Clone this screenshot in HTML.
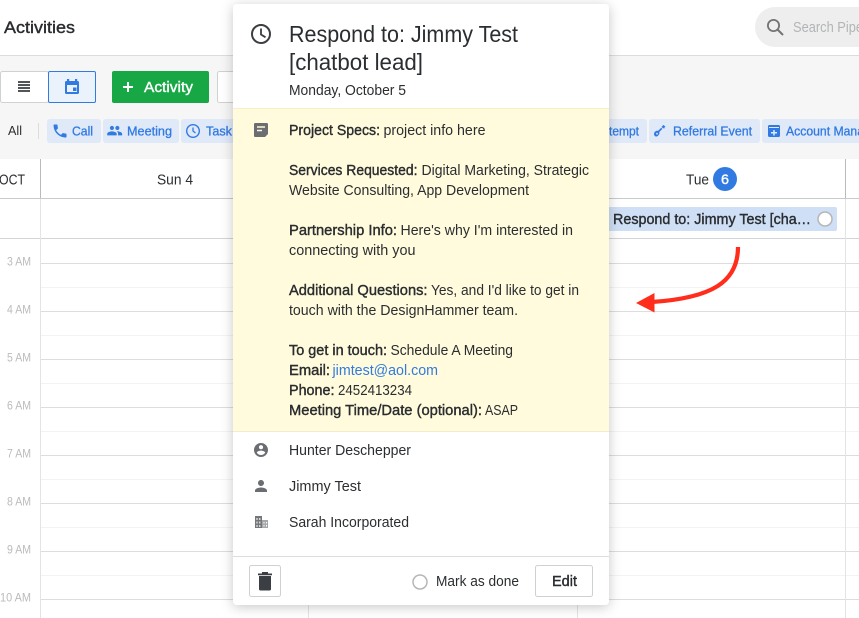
<!DOCTYPE html>
<html><head><meta charset="utf-8"><title>Activities</title>
<style>
html,body{margin:0;padding:0;background:#fff;width:859px;height:618px;overflow:hidden}
svg{display:block;font-family:"Liberation Sans",Arial,sans-serif}
text{fill:#2b2e31;font-size:14.6px}
.b{stroke:#26292c;stroke-width:.38px}
.w{stroke:#fff;stroke-width:.4px;fill:#fff}
.c text{fill:#317ae2;stroke:#317ae2;stroke-width:.3px;font-size:13px}
.h text{fill:#b9bbbd;font-size:12px}
</style></head><body>
<svg width="859" height="618" viewBox="0 0 859 618" xmlns="http://www.w3.org/2000/svg">
<defs>
<filter id="s" x="-10%" y="-10%" width="120%" height="120%"><feDropShadow dx="0" dy="2" stdDeviation="6" flood-color="#000" flood-opacity=".22"/></filter>
</defs>
<rect width="859" height="618" fill="#fff"/>
<!-- top bar -->
<text class="b" x="4" y="33" style="font-size:17px" textLength="71" lengthAdjust="spacingAndGlyphs">Activities</text>
<rect x="755" y="7" width="130" height="40" rx="20" fill="#eeeeee"/>
<circle cx="773.500" cy="25.500" r="5.600" fill="none" stroke="#727477" stroke-width="1.800"/>
<path d="M777.500 29.500l5.500 5.500" stroke="#727477" stroke-width="2"/>
<text x="793" y="32" style="font-size:15px;fill:#b2b4b6" textLength="70" lengthAdjust="spacingAndGlyphs">Search Pipe</text>
<rect y="55" width="859" height="1" fill="#dcdcdc"/>
<!-- toolbar -->
<rect y="56" width="859" height="103" fill="#f6f6f6"/>
<rect x="0.500" y="71.500" width="48" height="31" rx="2" fill="#fff" stroke="#d0d1d2"/>
<path d="M18 82h12M18 85h12M18 88h12M18 91h12" stroke="#3b3e42" stroke-width="1.800"/>
<rect x="48.500" y="71.500" width="47" height="31" rx="1.500" fill="#eaf2fc" stroke="#317ae2"/>
<path d="M66.500 81h11a1.500 1.500 0 0 1 1.500 1.500V92.500a1.500 1.500 0 0 1-1.500 1.500h-11A1.500 1.500 0 0 1 65 92.500V82.500A1.500 1.500 0 0 1 66.500 81z" fill="#317ae2"/>
<rect x="67" y="79" width="2.200" height="3" fill="#317ae2"/><rect x="75" y="79" width="2.200" height="3" fill="#317ae2"/>
<rect x="67" y="85" width="10" height="7" fill="#eaf2fc"/><rect x="73" y="87.500" width="3.500" height="3.500" fill="#317ae2"/>
<rect x="112" y="71" width="97" height="32" rx="2" fill="#17a745"/>
<path d="M123 87h10M128 82v10" stroke="#fff" stroke-width="2"/>
<text class="w" x="144" y="92" style="font-size:15px" textLength="49" lengthAdjust="spacingAndGlyphs">Activity</text>
<rect x="217.500" y="71.500" width="30" height="31" rx="2" fill="#fff" stroke="#d0d1d2"/>
<text x="8" y="135" style="font-size:13px" textLength="14" lengthAdjust="spacingAndGlyphs">All</text>
<rect x="38" y="123" width="1" height="16" fill="#dcdcdc"/>
<g fill="#dfe9f8">
<rect x="47" y="119" width="54" height="24" rx="3"/>
<rect x="103" y="119" width="76" height="24" rx="3"/>
<rect x="181" y="119" width="60" height="24" rx="3"/>
<rect x="600" y="119" width="47" height="24" rx="3"/>
<rect x="649" y="119" width="111" height="24" rx="3"/>
<rect x="762" y="119" width="110" height="24" rx="3"/>
</g>
<g class="c">
<text x="72" y="135.500" textLength="21" lengthAdjust="spacingAndGlyphs">Call</text>
<text x="127" y="135.500" textLength="45" lengthAdjust="spacingAndGlyphs">Meeting</text>
<text x="206" y="135.500" textLength="26" lengthAdjust="spacingAndGlyphs">Task</text>
<text x="609" y="135.500" textLength="30" lengthAdjust="spacingAndGlyphs">tempt</text>
<text x="673" y="135.500" textLength="79" lengthAdjust="spacingAndGlyphs">Referral Event</text>
<text x="786" y="135.500" textLength="78" lengthAdjust="spacingAndGlyphs">Account Mana</text>
</g>
<!-- chip icons -->
<path transform="translate(51.400 122.400) scale(.72)" fill="#317ae2" d="M6.620 10.790c1.440 2.830 3.760 5.140 6.590 6.590l2.200-2.200c.270-.270.670-.360 1.020-.240 1.120.370 2.330.570 3.570.570.550 0 1 .450 1 1V20c0 .550-.450 1-1 1-9.390 0-17-7.610-17-17 0-.550.450-1 1-1h3.500c.550 0 1 .450 1 1 0 1.250.200 2.450.570 3.570.110.350.030.740-.250 1.020l-2.200 2.200z"/>
<path transform="translate(106.500 122.500) scale(.68)" fill="#317ae2" d="M16 11c1.660 0 2.990-1.340 2.990-3S17.660 5 16 5c-1.660 0-3 1.340-3 3s1.340 3 3 3zm-8 0c1.660 0 2.990-1.340 2.990-3S9.660 5 8 5C6.340 5 5 6.340 5 8s1.340 3 3 3zm0 2c-2.330 0-7 1.170-7 3.500V19h14v-2.500c0-2.330-4.670-3.500-7-3.500zm8 0c-.290 0-.620.020-.970.050 1.160.840 1.970 1.970 1.970 3.450V19h6v-2.500c0-2.330-4.670-3.500-7-3.500z"/>
<circle cx="193" cy="131" r="6.300" fill="none" stroke="#317ae2" stroke-width="1.400"/><path d="M193 127.500V131l2.500 2" fill="none" stroke="#317ae2" stroke-width="1.300"/>
<path d="M655.500 136.500a2.900 2.900 0 0 1-.8-4.500l1.300-1c.8-.5 1.400-.1 2.200-.3l3-3 1.200 1.200-3 3c-.2.800.3 1.400-.2 2.200l-1 1.400c-.7.900-1.800 1.200-2.700 1z" fill="#317ae2"/><path d="M661.500 127l1.800-2 2.200 1.500-1 .6.300 1.200-1.400.1z" fill="#317ae2"/><circle cx="657" cy="133.700" r=".9" fill="#dfe9f8"/>
<rect x="768" y="125" width="12" height="12" rx="1.500" fill="#317ae2"/><rect x="769" y="127" width="10" height="1" fill="#dfe9f8"/><path d="M771 132.700h6M774 130v5.500" stroke="#dfe9f8" stroke-width="1.500"/>
<!-- grid -->
<rect y="159" width="859" height="459" fill="#fff"/>
<rect y="198" width="859" height="1" fill="#c9cacb"/>
<rect y="238" width="859" height="1" fill="#d3d4d5"/>
<g fill="#dcddde">
<rect x="40" y="263" width="819" height="1"/><rect x="40" y="311" width="819" height="1"/><rect x="40" y="359" width="819" height="1"/><rect x="40" y="407" width="819" height="1"/><rect x="40" y="455" width="819" height="1"/><rect x="40" y="503" width="819" height="1"/><rect x="40" y="551" width="819" height="1"/><rect x="40" y="599" width="819" height="1"/>
</g>
<g fill="#f3f3f4">
<rect x="40" y="287" width="819" height="1"/><rect x="40" y="335" width="819" height="1"/><rect x="40" y="383" width="819" height="1"/><rect x="40" y="431" width="819" height="1"/><rect x="40" y="479" width="819" height="1"/><rect x="40" y="527" width="819" height="1"/><rect x="40" y="575" width="819" height="1"/>
</g>
<g fill="#b9babb"><rect x="40" y="159" width="1" height="39"/><rect x="845" y="159" width="1" height="39"/></g>
<g fill="#e3e4e5"><rect x="40" y="199" width="1" height="419"/><rect x="308" y="199" width="1" height="419"/><rect x="577" y="199" width="1" height="419"/><rect x="845" y="199" width="1" height="419"/></g>
<text x="-1" y="184.500" style="font-size:15px" textLength="26" lengthAdjust="spacingAndGlyphs">OCT</text>
<text x="157" y="184.500" style="font-size:15px" textLength="36" lengthAdjust="spacingAndGlyphs">Sun 4</text>
<text x="686" y="184.500" style="font-size:15px" textLength="23" lengthAdjust="spacingAndGlyphs">Tue</text>
<circle cx="725" cy="179" r="12" fill="#317ae2"/>
<text class="w" x="721" y="184" style="font-size:14px" textLength="8" lengthAdjust="spacingAndGlyphs">6</text>
<g class="h">
<text x="7" y="265.500" textLength="24" lengthAdjust="spacingAndGlyphs">3 AM</text>
<text x="7" y="313.500" textLength="24" lengthAdjust="spacingAndGlyphs">4 AM</text>
<text x="7" y="361.500" textLength="24" lengthAdjust="spacingAndGlyphs">5 AM</text>
<text x="7" y="409.500" textLength="24" lengthAdjust="spacingAndGlyphs">6 AM</text>
<text x="7" y="457.500" textLength="24" lengthAdjust="spacingAndGlyphs">7 AM</text>
<text x="7" y="505.500" textLength="24" lengthAdjust="spacingAndGlyphs">8 AM</text>
<text x="7" y="553.500" textLength="24" lengthAdjust="spacingAndGlyphs">9 AM</text>
<text x="0" y="601.500" textLength="31" lengthAdjust="spacingAndGlyphs">10 AM</text>
</g>
<!-- event -->
<rect x="600" y="207" width="237" height="24" rx="2" fill="#cfdff5"/>
<text class="b" x="613" y="224" textLength="198" lengthAdjust="spacingAndGlyphs">Respond to: Jimmy Test [cha…</text>
<circle cx="825" cy="219" r="7" fill="#fff" stroke="#b4b6b8" stroke-width="1.500"/>
<!-- arrow -->
<path d="M738 247C738 282 712 298 652 302" fill="none" stroke="#ff2d1c" stroke-width="4.200"/>
<path d="M636 303L654.500 293L654.500 312.500z" fill="#ff2d1c"/>
<!-- popup -->
<rect x="233" y="4" width="376" height="601" rx="4" fill="#fff" filter="url(#s)"/>
<rect x="233" y="108" width="376" height="324" fill="#fffbdc"/>
<rect x="233" y="108" width="376" height="1" fill="#f6efc8"/>
<rect x="233" y="431" width="376" height="1" fill="#f1ecca"/>
<rect x="233" y="556" width="376" height="1" fill="#dcddde"/>
<circle cx="261" cy="34" r="9" fill="none" stroke="#3b3e42" stroke-width="2"/>
<path d="M261 28.500V34.500l4.500 2.800" fill="none" stroke="#3b3e42" stroke-width="1.800"/>
<text x="289" y="42" style="font-size:23px" textLength="229" lengthAdjust="spacingAndGlyphs">Respond to: Jimmy Test</text>
<text x="289" y="70" style="font-size:23px" textLength="134" lengthAdjust="spacingAndGlyphs">[chatbot lead]</text>
<text x="289" y="95" textLength="117" lengthAdjust="spacingAndGlyphs">Monday, October 5</text>
<rect x="254" y="123" width="14" height="14" rx="1.300" fill="#6a6d71"/>
<path d="M257 127h8M257 130.500h5" stroke="#fffbdc" stroke-width="1.500"/>
<path d="M265 137l3-3v3z" fill="#fffbdc"/>
<g>
<text class="b" x="289" y="135" textLength="91" lengthAdjust="spacingAndGlyphs">Project Specs:</text>
<text x="383.500" y="135" textLength="102" lengthAdjust="spacingAndGlyphs">project info here</text>
<text class="b" x="289" y="175" textLength="128.500" lengthAdjust="spacingAndGlyphs">Services Requested:</text>
<text x="421.500" y="175" textLength="167.500" lengthAdjust="spacingAndGlyphs">Digital Marketing, Strategic</text>
<text x="289" y="195" textLength="240" lengthAdjust="spacingAndGlyphs">Website Consulting, App Development</text>
<text class="b" x="289" y="235" textLength="108" lengthAdjust="spacingAndGlyphs">Partnership Info:</text>
<text x="400.500" y="235" textLength="172.500" lengthAdjust="spacingAndGlyphs">Here's why I'm interested in</text>
<text x="289" y="255" textLength="126.500" lengthAdjust="spacingAndGlyphs">connecting with you</text>
<text class="b" x="289" y="295" textLength="138.500" lengthAdjust="spacingAndGlyphs">Additional Questions:</text>
<text x="431" y="295" textLength="148" lengthAdjust="spacingAndGlyphs">Yes, and I'd like to get in</text>
<text x="289" y="315" textLength="229" lengthAdjust="spacingAndGlyphs">touch with the DesignHammer team.</text>
<text class="b" x="289" y="355" textLength="98" lengthAdjust="spacingAndGlyphs">To get in touch:</text>
<text x="390.500" y="355" textLength="122.500" lengthAdjust="spacingAndGlyphs">Schedule A Meeting</text>
<text class="b" x="289" y="375" textLength="41" lengthAdjust="spacingAndGlyphs">Email:</text>
<text x="332.500" y="375" style="fill:#317ae2" textLength="105.500" lengthAdjust="spacingAndGlyphs">jimtest@aol.com</text>
<text class="b" x="289" y="395" textLength="45.500" lengthAdjust="spacingAndGlyphs">Phone:</text>
<text x="338" y="395" textLength="74" lengthAdjust="spacingAndGlyphs">2452413234</text>
<text class="b" x="289" y="415" textLength="193" lengthAdjust="spacingAndGlyphs">Meeting Time/Date (optional):</text>
<text x="485" y="415" textLength="33" lengthAdjust="spacingAndGlyphs">ASAP</text>
</g>
<!-- people -->
<path transform="translate(252.600 441.600) scale(.7)" fill="#6a6d71" d="M12 2C6.480 2 2 6.480 2 12s4.480 10 10 10 10-4.480 10-10S17.520 2 12 2zm0 3c1.660 0 3 1.340 3 3s-1.340 3-3 3-3-1.340-3-3 1.340-3 3-3zm0 14.200c-2.500 0-4.710-1.280-6-3.220.030-1.990 4-3.080 6-3.080 1.990 0 5.970 1.090 6 3.080-1.290 1.940-3.500 3.220-6 3.220z"/>
<path transform="translate(252 477) scale(.75)" fill="#6a6d71" d="M12 12c2.210 0 4-1.790 4-4s-1.790-4-4-4-4 1.790-4 4 1.790 4 4 4zm0 2c-2.670 0-8 1.340-8 4v2h16v-2c0-2.660-5.330-4-8-4z"/>
<path d="M255 516h7v12h-7z" fill="#74777a"/><path d="M262 520h6v8h-6z" fill="#a5a7a9"/>
<path d="M257 518v2M259.800 518v2M257 521.500v2M259.800 521.500v2M257 525v2M259.800 525v2M264 522v1.500M266.500 522v1.500M264 525v1.500M266.500 525v1.500" stroke="#fff" stroke-width="1"/>
<text x="289" y="455" textLength="122" lengthAdjust="spacingAndGlyphs">Hunter Deschepper</text>
<text x="289" y="491" textLength="72" lengthAdjust="spacingAndGlyphs">Jimmy Test</text>
<text x="289" y="527" textLength="120" lengthAdjust="spacingAndGlyphs">Sarah Incorporated</text>
<!-- footer -->
<rect x="249.500" y="565.500" width="31" height="31" rx="2" fill="#fff" stroke="#cfd0d1"/>
<path d="M258 573.500h14v1.800h-14zM262 572h6v2h-6z" fill="#3b3e42"/><path d="M259 576h12v13a1.500 1.500 0 0 1-1.500 1.500h-9A1.500 1.500 0 0 1 259 589z" fill="#3b3e42"/>
<circle cx="420" cy="582" r="7" fill="#fff" stroke="#b4b6b8" stroke-width="1.500"/>
<text x="436" y="586" textLength="83" lengthAdjust="spacingAndGlyphs">Mark as done</text>
<rect x="535.500" y="565.500" width="57" height="31" rx="2" fill="#fff" stroke="#cfd0d1"/>
<text class="b" x="552" y="586" textLength="25" lengthAdjust="spacingAndGlyphs">Edit</text>
</svg>
</body></html>
